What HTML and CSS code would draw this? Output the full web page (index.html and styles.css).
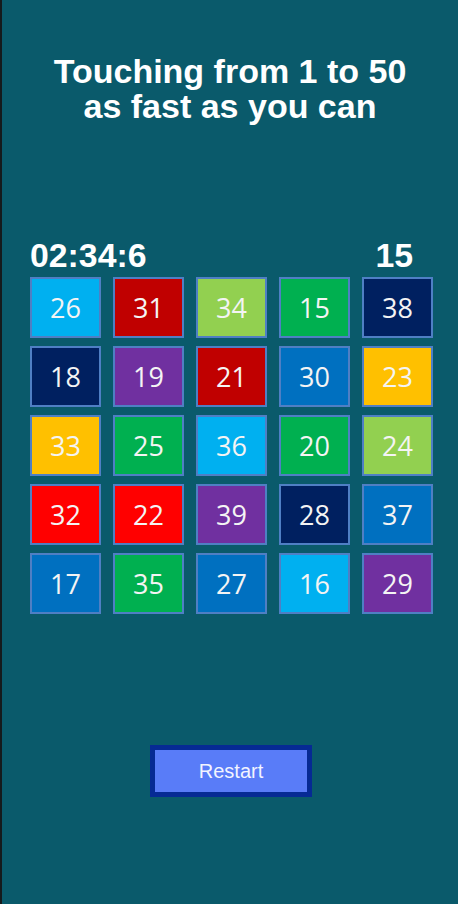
FILE: index.html
```html
<!DOCTYPE html>
<html lang="en">
<head>
<meta charset="utf-8">
<title>Touching from 1 to 50</title>
<link rel="stylesheet" href="styles.css">
</head>
<body>
<main class="page">
  <h1 class="title">Touching from 1 to 50<br>as fast as you can</h1>
  <div class="status">
    <span class="timer">02:34:6</span>
    <span class="score">15</span>
  </div>
  <div class="grid">
    <div class="tile c-lb">26</div>
    <div class="tile c-dr">31</div>
    <div class="tile c-lg">34</div>
    <div class="tile c-g">15</div>
    <div class="tile c-nv">38</div>

    <div class="tile c-nv">18</div>
    <div class="tile c-pu">19</div>
    <div class="tile c-dr">21</div>
    <div class="tile c-bl">30</div>
    <div class="tile c-ye">23</div>

    <div class="tile c-ye">33</div>
    <div class="tile c-g">25</div>
    <div class="tile c-lb">36</div>
    <div class="tile c-g">20</div>
    <div class="tile c-lg">24</div>

    <div class="tile c-rd">32</div>
    <div class="tile c-rd">22</div>
    <div class="tile c-pu">39</div>
    <div class="tile c-nv">28</div>
    <div class="tile c-bl">37</div>

    <div class="tile c-bl">17</div>
    <div class="tile c-g">35</div>
    <div class="tile c-bl">27</div>
    <div class="tile c-lb">16</div>
    <div class="tile c-pu">29</div>
  </div>
  <div class="actions">
    <button class="restart" type="button">Restart</button>
  </div>
</main>
</body>
</html>
```
FILE: styles.css
```css
* { box-sizing: border-box; }

html, body {
  margin: 0;
  padding: 0;
  height: 100%;
  background: #0a5a6b;
}

.page {
  min-height: 904px;
  border-left: 2px solid #151a1c;
  background: #0a5a6b;
  display: flex;
  flex-direction: column;
  padding-top: 54px;
  font-family: "Liberation Sans", Arial, sans-serif;
  color: #ffffff;
}

.title {
  margin: 0;
  font-size: 34px;
  line-height: 35px;
  font-weight: bold;
  text-align: center;
}

.status {
  margin-top: 114px;
  padding-left: 28px;
  padding-right: 45px;
  display: flex;
  justify-content: space-between;
  font-size: 33.8px;
  line-height: 34px;
  font-weight: bold;
}

.grid {
  margin-top: 5px;
  padding-left: 28px;
  display: grid;
  grid-template-columns: repeat(5, 71px);
  grid-auto-rows: 61px;
  column-gap: 12px;
  row-gap: 8px;
}

.tile {
  border: 2px solid #4f7fc4;
  display: flex;
  align-items: center;
  justify-content: center;
  font-family: "Open Sans", "Lato", sans-serif;
  font-size: 27px;
  color: #f4f4f4;
  padding-bottom: 1px;
}

.c-lb { background: #00b0f0; }
.c-dr { background: #c00000; }
.c-lg { background: #92d050; }
.c-g  { background: #00b050; }
.c-nv { background: #002060; }
.c-pu { background: #7030a0; }
.c-bl { background: #0070c0; }
.c-ye { background: #ffc000; }
.c-rd { background: #ff0000; }

.actions {
  margin-top: 131px;
  display: flex;
  justify-content: center;
  padding-left: 2px;
}

.restart {
  width: 162px;
  height: 52px;
  border: 5px solid #062a94;
  background: #597cf8;
  color: #f2f4ff;
  font-family: "Liberation Sans", Arial, sans-serif;
  font-size: 20px;
  padding: 0;
  cursor: pointer;
}
```
